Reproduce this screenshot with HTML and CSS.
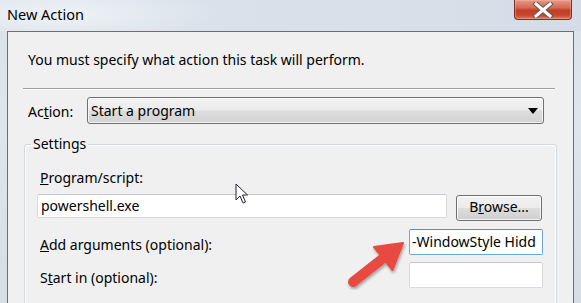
FILE: index.html
```
<!DOCTYPE html>
<html>
<head>
<meta charset="utf-8">
<link rel="stylesheet" href="styles.css">
</head>
<body>
<div class="window">
  <div class="titlebar">
    <span class="title">New Action</span>
    <div class="close">
      <svg width="26" height="16" viewBox="0 0 26 16"><path d="M6 2 L20 14 M20 2 L6 14" stroke="#5a5a5a" stroke-width="5" stroke-linecap="square"/><path d="M6 2 L20 14 M20 2 L6 14" stroke="#ffffff" stroke-width="3" stroke-linecap="square"/></svg>
    </div>
  </div>
  <div class="frame">
    <div class="client">
      <div class="intro">You must specify what action this task will perform.</div>
      <div class="sep"></div>
      <div class="action-row">
        <span class="action-label">Ac<u>t</u>ion:</span>
        <div class="combo">
          <span>Start a program</span>
          <svg width="10" height="6" viewBox="0 0 10 6"><path d="M0 0 H10 L5 6 Z" fill="#000"/></svg>
        </div>
      </div>
      <fieldset class="settings">
        <legend>Settings</legend>
        <div class="inner">
          <div class="lbl"><u>P</u>rogram/script:</div>
          <div class="prog-row">
            <div class="textbox prog">powershell.exe</div>
            <div class="button">B<u>r</u>owse...</div>
          </div>
          <div class="field-row first">
            <span class="lbl"><u>A</u>dd arguments (optional):</span>
            <div class="textbox small focused">-WindowStyle Hidd</div>
          </div>
          <div class="field-row">
            <span class="lbl">S<u>t</u>art in (optional):</span>
            <div class="textbox small"></div>
          </div>
        </div>
      </fieldset>
    </div>
  </div>
  <svg class="cursor" width="14" height="21" viewBox="0 0 14 21"><path d="M1 1 L1 17 L5 13 L8 20 L10.5 19 L7.5 12 L12.5 12 Z" fill="#fff" stroke="#222236" stroke-width="1" stroke-linejoin="round"/></svg>
  <svg class="arrow" width="581" height="303" viewBox="0 0 581 303">
    <defs><filter id="sh" x="-20%" y="-20%" width="140%" height="140%"><feDropShadow dx="1" dy="2" stdDeviation="1.5" flood-color="#000" flood-opacity="0.35"/></filter></defs>
    <g filter="url(#sh)" fill="#e84a3f">
      <line x1="353" y1="282" x2="386" y2="256" stroke="#e84a3f" stroke-width="10" stroke-linecap="round"/>
      <path d="M403 243 L392.5 270 L374 247 Z" stroke="#e84a3f" stroke-width="2" stroke-linejoin="round"/>
    </g>
  </svg>
</div>
</body>
</html>
```
FILE: styles.css
```
* { box-sizing: border-box; }
html, body { margin: 0; padding: 0; }
body {
  width: 581px;
  height: 303px;
  overflow: hidden;
  font-family: "Noto Sans", "Open Sans", sans-serif;
  font-size: 14px;
  color: #000;
}
.window {
  position: relative;
  width: 581px;
  height: 303px;
  display: flex;
  flex-direction: column;
  background: linear-gradient(180deg, #d9e1ea 0%, #dfe5ec 40%, #d6dde5 100%);
}
.titlebar {
  height: 31px;
  flex: none;
  display: flex;
  align-items: flex-start;
  background: radial-gradient(ellipse 160px 30px at 60px 14px, #eef2f6 0%, rgba(238,242,246,0) 100%),
              linear-gradient(90deg, #dbe3ec 0%, #d8e0ea 60%, #d4dde7 100%);
}
.title {
  padding-left: 7px;
  padding-top: 4px;
  line-height: 20px;
  font-size: 14.5px;
}
.close {
  margin-left: auto;
  margin-right: 9px;
  width: 58px;
  height: 20px;
  border: 1px solid #7e2f24;
  border-top: none;
  border-radius: 0 0 4px 4px;
  background: linear-gradient(180deg, #e49a88 0%, #d66a52 40%, #c23d27 55%, #c9462e 80%, #dd7a5f 100%);
  display: flex;
  align-items: center;
  justify-content: center;
  box-shadow: inset 0 0 0 1px rgba(255,200,180,0.35);
}
.frame {
  flex: 1;
  padding: 0 7px;
  display: flex;
}
.client {
  flex: 1;
  background: #f0f0f0;
  border: 1px solid #6e6e6e;
  border-bottom: none;
}
.intro {
  margin-top: 18px;
  padding-left: 20px;
  line-height: 20px;
  font-size: 14px;
}
.sep {
  margin: 18px 18px 0 15px;
  height: 2px;
  border-top: 1px solid #a0a0a0;
  border-bottom: 1px solid #ffffff;
}
.action-row {
  margin-top: 7px;
  display: flex;
  align-items: center;
  height: 27px;
}
.action-label {
  width: 79px;
  padding-left: 20px;
  line-height: 20px;
  padding-top: 2px;
}
.combo {
  width: 457px;
  height: 27px;
  border: 1px solid #707070;
  border-radius: 3px;
  background: linear-gradient(180deg, #f3f3f3 0%, #ebebeb 48%, #dddddd 52%, #d3d3d3 100%);
  display: flex;
  align-items: center;
  justify-content: space-between;
  padding: 0 5px 0 3px;
  line-height: 20px;
  box-shadow: inset 0 0 0 1px rgba(255,255,255,0.7);
}
.settings {
  margin: 10px 16px 0 16px;
  padding: 0;
  border: 1px solid #d2d9de;
  border-radius: 3px;
  box-shadow: inset 0 0 0 1px #ffffff;
  min-width: 0;
}
.settings legend {
  margin-left: 6px;
  padding: 0 2px;
  line-height: 20px;
  font-size: 14px;
}
.inner {
  padding: 14px 13px 20px 12px;
}
.lbl {
  line-height: 20px;
  padding-left: 3px;
}
.prog-row {
  margin-top: 6px;
  display: flex;
  align-items: flex-start;
  gap: 9px;
  padding-right: 1px;
}
.textbox {
  background: #ffffff;
  border: 1px solid #d7dbe0;
  border-top-color: #c5c9cf;
  border-radius: 2px;
  line-height: 20px;
  padding: 1px 3px;
  white-space: nowrap;
  overflow: hidden;
}
.prog {
  flex: 1;
  height: 24px;
  padding-top: 1px;
}
.button {
  width: 86px;
  height: 26px;
  margin-top: 1px;
  border: 1px solid #707070;
  border-radius: 3px;
  background: linear-gradient(180deg, #f2f2f2 0%, #ebebeb 48%, #dddddd 52%, #cfcfcf 100%);
  box-shadow: inset 0 0 0 1px rgba(255,255,255,0.75);
  text-align: center;
  line-height: 22px;
}
.field-row {
  margin-top: 7px;
  display: flex;
  justify-content: space-between;
  align-items: center;
}
.field-row.first { margin-top: 8px; }
.field-row .lbl { padding-top: 5px; }
.small {
  width: 134px;
  height: 26px;
  padding-top: 2px;
}
.focused {
  border-color: #6fa7dc;
  border-top-color: #4d8fd0;
  padding-left: 2px;
  padding-right: 0;
}
.cursor {
  position: absolute;
  left: 235px;
  top: 183px;
}
.arrow {
  position: absolute;
  left: 0;
  top: 0;
  pointer-events: none;
}
```
